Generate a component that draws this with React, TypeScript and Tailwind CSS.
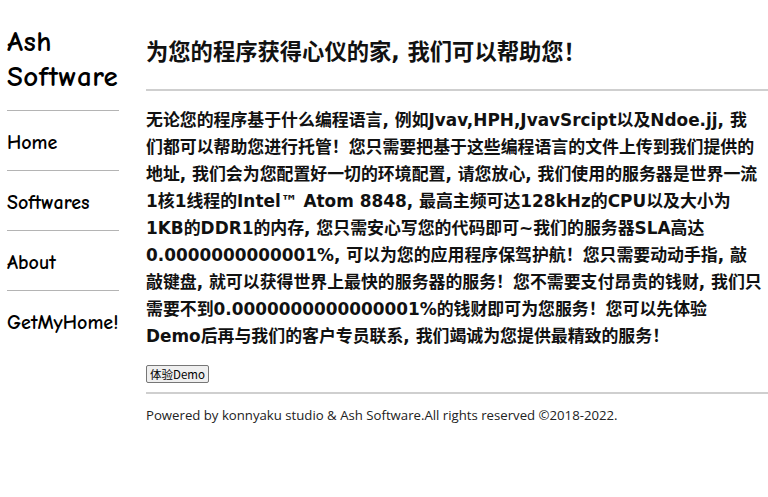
const NAV = ["Home", "Softwares", "About", "GetMyHome!"];

const comic = "font-['Comic_Sans_MS','Comic_Neue','DejaVu_Sans',sans-serif]";
const body = "font-['DejaVu_Sans','Noto_Sans_CJK_SC',sans-serif]";

// lines as they wrap in the original page
const LINES = [
  "无论您的程序基于什么编程语言, 例如Jvav,HPH,JvavSrcipt以及Ndoe.jj, 我",
  "们都可以帮助您进行托管！您只需要把基于这些编程语言的文件上传到我们提供的",
  "地址, 我们会为您配置好一切的环境配置, 请您放心, 我们使用的服务器是世界一流",
  "1核1线程的Intel™ Atom 8848, 最高主频可达128kHz的CPU以及大小为",
  "1KB的DDR1的内存, 您只需安心写您的代码即可~我们的服务器SLA高达",
  "0.0000000000001%, 可以为您的应用程序保驾护航！您只需要动动手指, 敲",
  "敲键盘, 就可以获得世界上最快的服务器的服务！您不需要支付昂贵的钱财, 我们只",
  "需要不到0.0000000000000001%的钱财即可为您服务！您可以先体验",
  "Demo后再与我们的客户专员联系, 我们竭诚为您提供最精致的服务！",
];

function Sidebar() {
  return (
    <aside className={`w-[112px] shrink-0 ${comic} font-bold text-black`}>
      <h1 className="pt-[24px] pb-[16px] text-[29px] leading-[35px] tracking-[0.5px]">
        Ash
        <br />
        Software
      </h1>
      {NAV.map((n) => (
        <div key={n}>
          <hr className="border-t border-[#b4b4b4]" />
          <div className="flex h-[59px] items-center pt-[4px] text-[20px]">{n}</div>
        </div>
      ))}
    </aside>
  );
}

export default function App() {
  return (
    <div className="flex min-h-[497px] overflow-hidden bg-white pl-[7px]">
      <Sidebar />
      <main className={`ml-[27px] min-w-0 flex-1 ${body} text-[#111]`}>
        <h2 className="pt-[37px] pb-[21px] text-[22.3px] font-semibold leading-[31px]">
          为您的程序获得心仪的家, 我们可以帮助您！
        </h2>
        <hr className="border-t-2 border-[#cfcfcf]" />
        <p className="mt-[16px] whitespace-nowrap text-[16.9px] font-semibold leading-[27px]">
          {LINES.map((l, i) => (
            <span key={i}>
              {l}
              {i < LINES.length - 1 && <br />}
            </span>
          ))}
        </p>
        <button className="mt-[15px] rounded-[2px] border border-[#767676] bg-[#efefef] px-[3px] font-['Noto_Sans_CJK_SC',sans-serif] text-[11.5px] leading-[16px] text-black">
          体验Demo
        </button>
        <hr className="mt-[6px] border-t-2 border-[#cfcfcf]" />
        <p className="mt-[12px] font-['Open_Sans',sans-serif] text-[13.2px] leading-[18px] text-[#222]">
          Powered by konnyaku studio &amp; Ash Software.All rights reserved ©2018-2022.
        </p>
      </main>
    </div>
  );
}
